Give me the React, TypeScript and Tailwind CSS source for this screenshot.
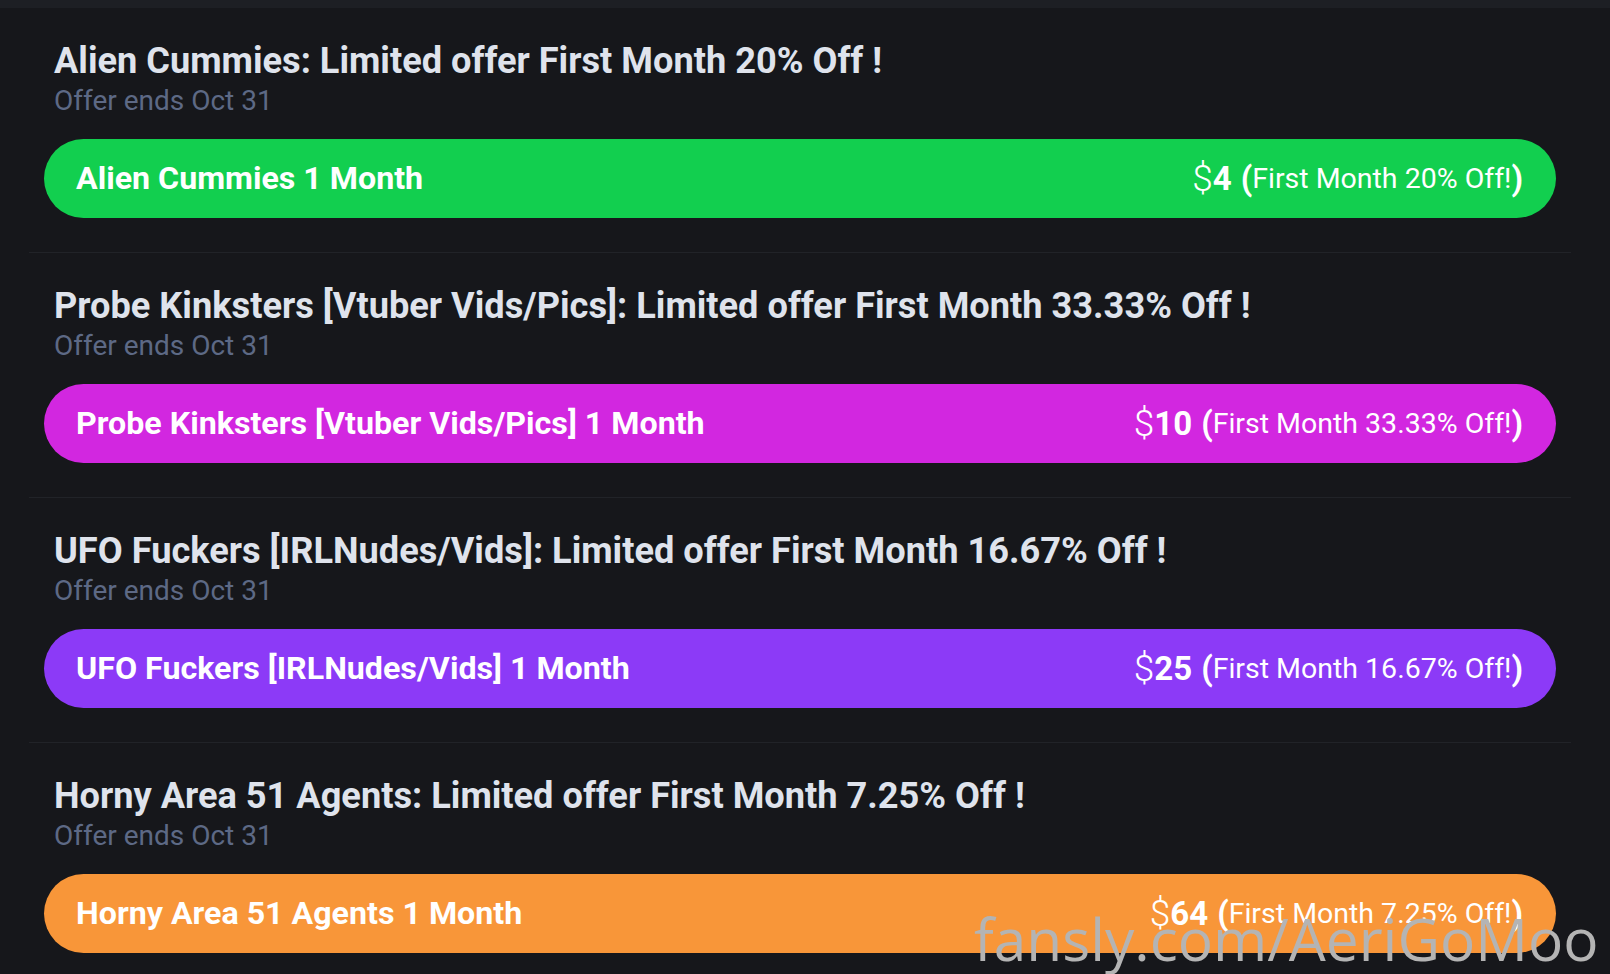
import React from "react";

type Offer = {
  name: string;
  pct: string;
  price: string;
  bg: string;
};

const offers: Offer[] = [
  { name: "Alien Cummies", pct: "20%", price: "4", bg: "bg-[#12cf4f]" },
  { name: "Probe Kinksters [Vtuber Vids/Pics]", pct: "33.33%", price: "10", bg: "bg-[#d227e0]" },
  { name: "UFO Fuckers [IRLNudes/Vids]", pct: "16.67%", price: "25", bg: "bg-[#8c3af7]" },
  { name: "Horny Area 51 Agents", pct: "7.25%", price: "64", bg: "bg-[#f89639]" },
];

function OfferItem({ o, first }: { o: Offer; first: boolean }) {
  return (
    <div className={`flex flex-col pt-[33px] pb-[34px] ${first ? "" : "border-t border-[#212328]"}`}>
      <div className="px-[25px] text-[36.2px] leading-[40px] font-bold text-[#dfe3ec] whitespace-nowrap">
        {o.name}: Limited offer First Month {o.pct} Off !
      </div>
      <div className="px-[25px] mt-[3px] text-[28px] leading-[34px] text-[#5d6985] whitespace-nowrap">
        Offer ends Oct 31
      </div>
      <div className="px-[15px] mt-[21px]">
        <div
          className={`${o.bg} h-[79px] rounded-full flex items-center justify-between pl-[32px] pr-[33px] text-white`}
        >
          <span className="text-[32.2px] font-bold whitespace-nowrap">{o.name} 1 Month</span>
          <span className="flex items-center whitespace-nowrap leading-none">
            <span className="text-[37px] font-light">$</span>
            <span className="text-[33px] font-bold">{o.price}</span>
            <span className="text-[33px] font-bold ml-[9px]">(</span>
            <span className="text-[28.5px] mt-[1px]">First Month {o.pct} Off!</span>
            <span className="text-[33px] font-bold">)</span>
          </span>
        </div>
      </div>
    </div>
  );
}

export default function App() {
  return (
    <div
      className="relative w-[1610px] h-[974px] overflow-hidden bg-[#16171b]"
      style={{ fontFamily: "Roboto, 'Liberation Sans', sans-serif" }}
    >
      <div className="h-[8px] bg-[#1d1f24]" />
      <div className="ml-[29px] mr-[39px] flex flex-col">
        {offers.map((o, i) => (
          <OfferItem key={o.name} o={o} first={i === 0} />
        ))}
      </div>
      <div
        className="absolute left-[974px] top-[909px] text-[58.6px] leading-[58px] text-[#b4b4b4] whitespace-nowrap"
        style={{ fontFamily: "'Open Sans', 'Noto Sans', sans-serif" }}
      >
        fansly.com/AeriGoMoo
      </div>
    </div>
  );
}
